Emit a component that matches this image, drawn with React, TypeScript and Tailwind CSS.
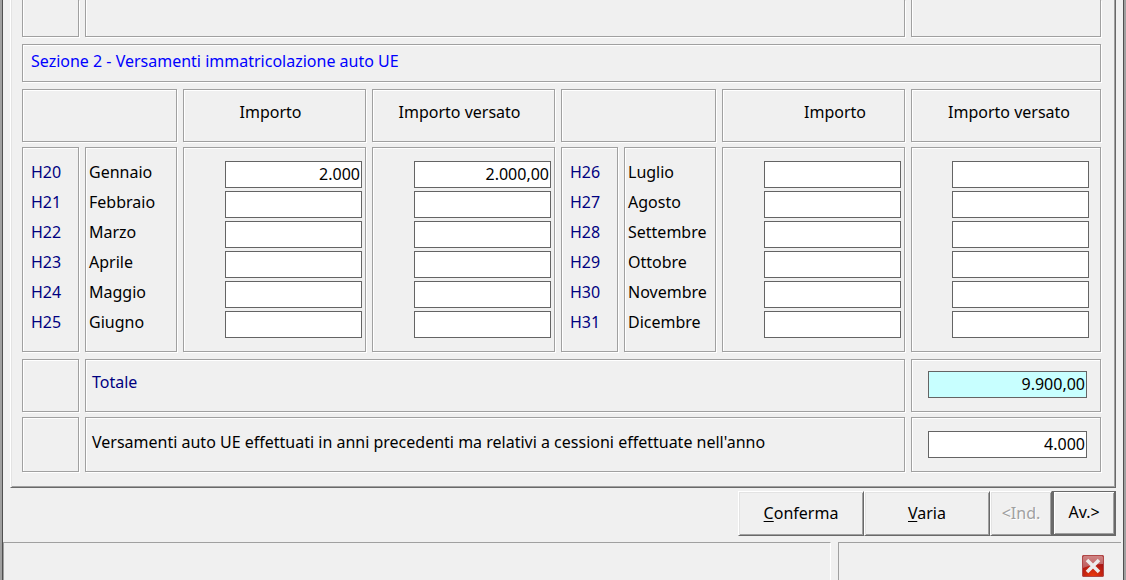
import type { ReactNode } from "react";

const MONTHS_LEFT = [
  { code: "H20", name: "Gennaio", due: "2.000", paid: "2.000,00" },
  { code: "H21", name: "Febbraio", due: "", paid: "" },
  { code: "H22", name: "Marzo", due: "", paid: "" },
  { code: "H23", name: "Aprile", due: "", paid: "" },
  { code: "H24", name: "Maggio", due: "", paid: "" },
  { code: "H25", name: "Giugno", due: "", paid: "" },
];

const MONTHS_RIGHT = [
  { code: "H26", name: "Luglio", due: "", paid: "" },
  { code: "H27", name: "Agosto", due: "", paid: "" },
  { code: "H28", name: "Settembre", due: "", paid: "" },
  { code: "H29", name: "Ottobre", due: "", paid: "" },
  { code: "H30", name: "Novembre", due: "", paid: "" },
  { code: "H31", name: "Dicembre", due: "", paid: "" },
];

type Month = (typeof MONTHS_LEFT)[number];

function Box({ className = "", children }: { className?: string; children?: ReactNode }) {
  return (
    <div
      className={`min-w-0 border border-[#a0a0a0] shadow-[inset_1px_1px_0_#fff,1px_1px_0_#fff] ${className}`}
    >
      {children}
    </div>
  );
}

function OpenBox({ className = "" }: { className?: string }) {
  return (
    <div
      className={`h-[37px] border-r border-b border-l border-[#a0a0a0] shadow-[inset_1px_0_0_#fff,1px_1px_0_#fff] ${className}`}
    />
  );
}

function Field({ label, id, value, className = "bg-white" }: { label?: string; id?: string; value: string; className?: string }) {
  return (
    <input
      type="text"
      id={id}
      aria-label={label}
      defaultValue={value}
      className={`block h-[27px] w-full border border-[#646464] px-px pb-0.5 text-right outline-none ${className}`}
    />
  );
}

function MonthGroup({ months, lastPadding }: { months: Month[]; lastPadding: string }) {
  return (
    <>
      <Box className="pt-[9px] pl-2 text-[#000080]">
        {months.map((m) => (
          <div key={m.code} className="h-[30px] leading-[30px]">{m.code}</div>
        ))}
      </Box>
      <Box className="pt-[9px] pl-[3px]">
        {months.map((m) => (
          <label key={m.code} htmlFor={m.code} className="block h-[30px] leading-[30px]">{m.name}</label>
        ))}
      </Box>
      <Box className="flex flex-col gap-[3px] pt-[13px] pr-[3px] pl-[41px]">
        {months.map((m) => (
          <Field key={m.code} id={m.code} value={m.due} />
        ))}
      </Box>
      <Box className={`flex flex-col gap-[3px] pt-[13px] ${lastPadding}`}>
        {months.map((m) => (
          <Field key={m.code} label={`Importo versato ${m.name}`} value={m.paid} />
        ))}
      </Box>
    </>
  );
}

const BUTTON =
  "h-[45px] pb-0.5 border-t border-l border-r border-b border-t-white border-l-white border-r-[#696969] border-b-[#696969] shadow-[inset_1px_1px_0_#e3e3e3,inset_-1px_-1px_0_#a0a0a0]";

function CloseIcon() {
  return (
    <svg viewBox="0 0 22 22" className="size-[22px]" aria-hidden="true">
      <defs>
        <linearGradient id="closeTop" x1="0" y1="0" x2="0" y2="1">
          <stop offset="0" stopColor="#cf8484" />
          <stop offset="1" stopColor="#bd5a5a" />
        </linearGradient>
        <radialGradient id="closeGlow" cx="0.5" cy="1" r="0.7">
          <stop offset="0" stopColor="#ee3c0c" />
          <stop offset="1" stopColor="#a81414" />
        </radialGradient>
      </defs>
      <rect width="22" height="22" rx="2" fill="url(#closeGlow)" />
      <path d="M1 2a1 1 0 0 1 1-1h18a1 1 0 0 1 1 1v7Q11 9 1 13Z" fill="url(#closeTop)" />
      <rect x="0.5" y="0.5" width="21" height="21" rx="1.5" fill="none" stroke="#b04848" />
      <path d="M5 5l12 12M17 5L5 17" stroke="#ececec" strokeWidth="3.6" />
    </svg>
  );
}

export default function App() {
  return (
    <div className="flex min-h-screen flex-col border-r-2 border-l-2 border-[#a0a0a0] bg-[#f0f0f0] font-['Noto_Sans',sans-serif] text-base leading-6 text-black">
      <div className="flex flex-1 flex-col border-r border-l border-[#505050]">
        <main className="mx-[7px] border-r border-b border-l border-l-white border-r-[#696969] border-b-[#696969] shadow-[inset_1px_0_0_#e3e3e3,inset_-1px_-1px_0_#a0a0a0]">
          <div className="grid grid-cols-[57fr_92fr_183fr_183fr_57fr_92fr_183fr_190fr] gap-x-1.5 pr-3.5 pb-[15px] pl-[11px]">
            <OpenBox />
            <OpenBox className="col-span-6" />
            <OpenBox />

            <Box className="col-span-8 mt-[7px] h-[38px] pt-1 pl-2 text-[#0000ff]">
              <h2>Sezione 2 - Versamenti immatricolazione auto UE</h2>
            </Box>

            <Box className="col-span-2 mt-[7px] h-[53px]" />
            <Box className="mt-[7px] h-[53px] pt-2.5 pr-2 text-center">Importo</Box>
            <Box className="mt-[7px] h-[53px] pt-2.5 pr-2 text-center">Importo versato</Box>
            <Box className="col-span-2 mt-[7px] h-[53px]" />
            <Box className="mt-[7px] h-[53px] pt-2.5 pr-[38px] text-right">Importo</Box>
            <Box className="mt-[7px] h-[53px] pt-2.5 pr-[30px] text-right">Importo versato</Box>

            <div className="col-span-8 mt-[5px] grid h-[205px] grid-cols-subgrid">
              <MonthGroup months={MONTHS_LEFT} lastPadding="pl-[41px] pr-[3px]" />
              <MonthGroup months={MONTHS_RIGHT} lastPadding="pl-10 pr-[11px]" />
            </div>

            <Box className="mt-[7px] h-[53px]" />
            <Box className="col-span-6 mt-[7px] h-[53px] pt-2.5 pl-1.5 text-[#000080]">
              <label htmlFor="totale">Totale</label>
            </Box>
            <Box className="mt-[7px] h-[53px] pt-[11px] pr-[13px] pl-4">
              <Field id="totale" value="9.900,00" className="bg-[#c8ffff]" />
            </Box>

            <Box className="mt-[5px] h-[55px]" />
            <Box className="col-span-6 mt-[5px] h-[55px] pt-3 pl-1.5">
              <label htmlFor="precedenti">
                Versamenti auto UE effettuati in anni precedenti ma relativi a cessioni effettuate nell'anno
              </label>
            </Box>
            <Box className="mt-[5px] h-[55px] pt-[13px] pr-[13px] pl-4">
              <Field id="precedenti" value="4.000" />
            </Box>
          </div>
        </main>

        <div className="mt-[3px] mr-[7px] flex justify-end">
          <button type="button" className={`w-[126px] ${BUTTON}`}><u className="underline-offset-2">C</u>onferma</button>
          <button type="button" className={`w-[126px] ${BUTTON}`}><u className="underline-offset-2">V</u>aria</button>
          <button type="button" disabled className={`w-[62px] text-[#a0a0a0] [text-shadow:1px_1px_0_#fff] ${BUTTON}`}>&lt;Ind.</button>
          <button type="button" className="h-[45px] w-16 border-2 border-[#696969] border-t pb-0.5 shadow-[inset_1px_1px_0_#fff,inset_-1px_-1px_0_#a0a0a0]">Av.&gt;</button>
        </div>

        <footer className="mt-1.5 mr-0.5 flex flex-1 gap-[7px]">
          <div className="flex-1 border-t border-r border-l border-[#a0a0a0] border-r-white" />
          <div className="flex w-[283px] justify-end border-t border-l border-[#a0a0a0] pt-3 pr-[17px]">
            <button type="button" aria-label="Chiudi" className="size-[22px]"><CloseIcon /></button>
          </div>
        </footer>
      </div>
    </div>
  );
}
